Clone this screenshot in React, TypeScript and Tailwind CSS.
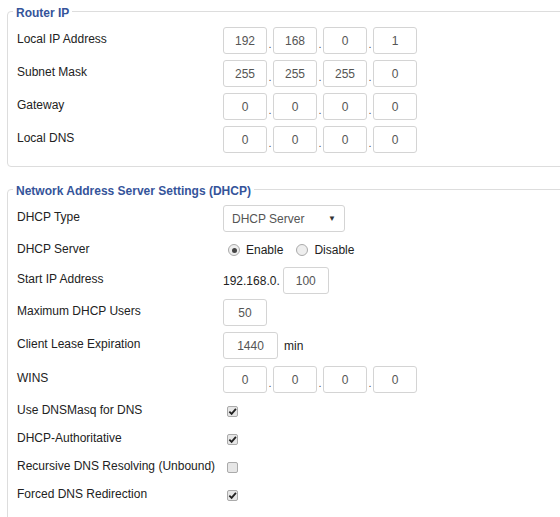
const font = { fontFamily: "'Liberation Sans', Arial, sans-serif" };

function Box({ v, w = "w-[44px]" }: { v: string; w?: string }) {
  return (
    <div className={`${w} h-[27px] border border-[#d4d4d4] rounded-[3px] bg-white flex items-center justify-center text-[12px] text-[#555]`}>
      {v}
    </div>
  );
}

function Ip({ vals }: { vals: string[] }) {
  return (
    <div className="flex items-end">
      {vals.map((v, i) => (
        <div key={i} className="flex items-end">
          {i > 0 && <span className="w-[6px] text-center text-[11px] text-[#555] leading-none mb-[4px]">.</span>}
          <Box v={v} />
        </div>
      ))}
    </div>
  );
}

function Row({ label, h, children }: { label: string; h: string; children?: React.ReactNode }) {
  return (
    <div className={`flex items-center ${h}`}>
      <div className="w-[206px] text-[12px] text-[#222] whitespace-nowrap -mt-[3px]">{label}</div>
      {children}
    </div>
  );
}

function Check({ on }: { on: boolean }) {
  return (
    <div className="w-[11px] h-[11px] ml-[4px] border border-[#aaa] rounded-[2px] bg-[#e6e6e6] flex items-center justify-center">
      {on && (
        <svg width="9" height="9" viewBox="0 0 10 10">
          <path d="M1.5 5.2 L4 7.6 L8.8 2" stroke="#222" strokeWidth="2" fill="none" />
        </svg>
      )}
    </div>
  );
}

function Radio({ on }: { on: boolean }) {
  return (
    <div className="w-[12px] h-[12px] rounded-full border border-[#aaa] bg-[#eee] flex items-center justify-center">
      {on && <div className="w-[5px] h-[5px] rounded-full bg-[#444]" />}
    </div>
  );
}

function Legend({ t }: { t: string }) {
  return (
    <div className="absolute -top-[8px] left-[5px] bg-white px-[3px] text-[12px] font-bold text-[#35549a]">{t}</div>
  );
}

export default function App() {
  return (
    <div className="w-[560px] h-[517px] bg-white overflow-hidden pl-[7px]" style={font}>
      <div className="relative mt-[11px] -mr-[20px] border border-[#ddd] rounded-[4px] pl-[9px] pt-[12px] h-[156px]">
        <Legend t="Router IP" />
        <Row label="Local IP Address" h="h-[33px]"><Ip vals={["192", "168", "0", "1"]} /></Row>
        <Row label="Subnet Mask" h="h-[33px]"><Ip vals={["255", "255", "255", "0"]} /></Row>
        <Row label="Gateway" h="h-[33px]"><Ip vals={["0", "0", "0", "0"]} /></Row>
        <Row label="Local DNS" h="h-[33px]"><Ip vals={["0", "0", "0", "0"]} /></Row>
      </div>
      <div className="relative mt-[22px] -mr-[20px] border border-[#ddd] rounded-[4px] pl-[9px] pt-[12px] h-[400px]">
        <Legend t="Network Address Server Settings (DHCP)" />
        <Row label="DHCP Type" h="h-[33px]">
          <div className="w-[122px] h-[27px] border border-[#d4d4d4] rounded-[3px] flex items-center justify-between px-[8px] text-[12px] text-[#555]">
            <span>DHCP Server</span><span className="text-[8px] text-[#333]">▼</span>
          </div>
        </Row>
        <Row label="DHCP Server" h="h-[30px]">
          <div className="flex items-center text-[12px] text-[#222] gap-[6px] ml-[5px]">
            <Radio on /> <span>Enable</span>
            <span className="w-[1px]" /> <Radio on={false} /> <span>Disable</span>
          </div>
        </Row>
        <Row label="Start IP Address" h="h-[31px]">
          <span className="text-[12px] text-[#222] mr-[3px]">192.168.0.</span>
          <Box v="100" w="w-[46px]" />
        </Row>
        <Row label="Maximum DHCP Users" h="h-[33px]"><Box v="50" /></Row>
        <Row label="Client Lease Expiration" h="h-[33px]">
          <Box v="1440" w="w-[55px]" /><span className="ml-[6px] text-[12px] text-[#222]">min</span>
        </Row>
        <Row label="WINS" h="h-[35px]"><Ip vals={["0", "0", "0", "0"]} /></Row>
        <Row label="Use DNSMasq for DNS" h="h-[28px]"><Check on /></Row>
        <Row label="DHCP-Authoritative" h="h-[28px]"><Check on /></Row>
        <Row label="Recursive DNS Resolving (Unbound)" h="h-[28px]"><Check on={false} /></Row>
        <Row label="Forced DNS Redirection" h="h-[28px]"><Check on /></Row>
      </div>
    </div>
  );
}
